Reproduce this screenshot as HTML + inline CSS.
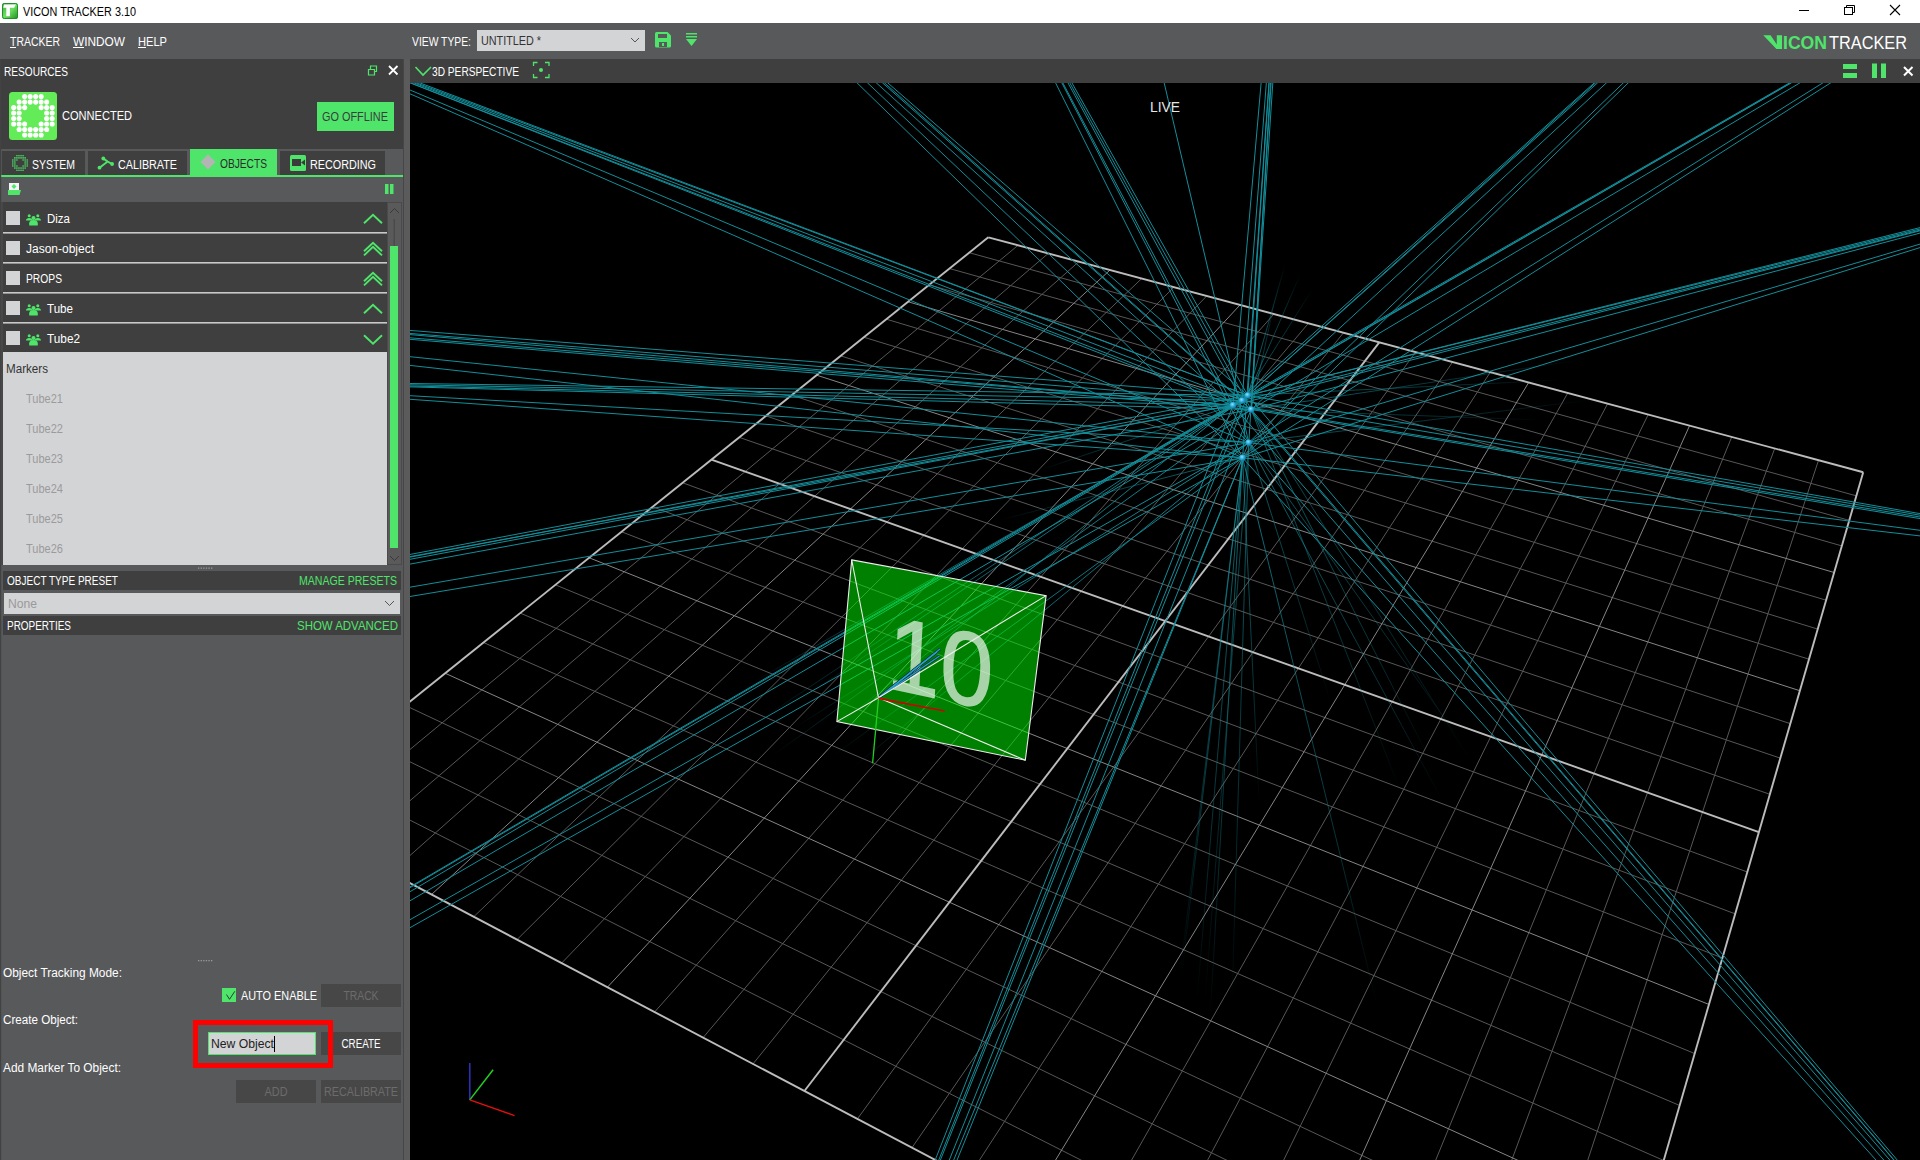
<!DOCTYPE html>
<html><head><meta charset="utf-8"><title>Vicon Tracker</title>
<style>html,body{margin:0;padding:0;background:#58595b;overflow:hidden;width:1920px;height:1160px}svg{display:block}text{white-space:pre}</style>
</head><body>
<svg width="1920" height="1160" viewBox="0 0 1920 1160">
<defs><clipPath id="vp"><rect x="410" y="83" width="1510" height="1077"/></clipPath><radialGradient id="mk" cx="0.4" cy="0.35" r="0.7"><stop offset="0" stop-color="#8fe3ff"/><stop offset="0.5" stop-color="#2aa9da"/><stop offset="1" stop-color="#0e6f95"/></radialGradient></defs>
<rect x="410" y="83" width="1510" height="1077" fill="#000" />
<g clip-path="url(#vp)">
<line x1="1018.02" y1="245.32" x2="311.41" y2="831.22" stroke="#575757" stroke-width="1" />
<line x1="969.21" y1="252.70" x2="1856.36" y2="495.84" stroke="#575757" stroke-width="1" />
<line x1="1048.19" y1="253.42" x2="350.40" y2="851.76" stroke="#575757" stroke-width="1" />
<line x1="949.48" y1="268.54" x2="1849.25" y2="520.39" stroke="#575757" stroke-width="1" />
<line x1="1078.85" y1="261.65" x2="390.42" y2="872.85" stroke="#575757" stroke-width="1" />
<line x1="929.11" y1="284.89" x2="1841.85" y2="545.92" stroke="#575757" stroke-width="1" />
<line x1="1141.71" y1="278.53" x2="473.71" y2="916.74" stroke="#575757" stroke-width="1" />
<line x1="886.36" y1="319.20" x2="1826.11" y2="600.20" stroke="#575757" stroke-width="1" />
<line x1="1173.94" y1="287.18" x2="517.07" y2="939.59" stroke="#575757" stroke-width="1" />
<line x1="863.90" y1="337.23" x2="1817.74" y2="629.08" stroke="#575757" stroke-width="1" />
<line x1="1206.71" y1="295.98" x2="561.63" y2="963.07" stroke="#575757" stroke-width="1" />
<line x1="840.66" y1="355.88" x2="1809.00" y2="659.23" stroke="#575757" stroke-width="1" />
<line x1="1273.94" y1="314.03" x2="654.58" y2="1012.04" stroke="#575757" stroke-width="1" />
<line x1="791.72" y1="395.16" x2="1790.33" y2="723.66" stroke="#575757" stroke-width="1" />
<line x1="1308.44" y1="323.29" x2="703.08" y2="1037.60" stroke="#575757" stroke-width="1" />
<line x1="765.92" y1="415.87" x2="1780.33" y2="758.14" stroke="#575757" stroke-width="1" />
<line x1="1343.54" y1="332.71" x2="753.00" y2="1063.90" stroke="#575757" stroke-width="1" />
<line x1="739.17" y1="437.34" x2="1769.86" y2="794.27" stroke="#575757" stroke-width="1" />
<line x1="1415.63" y1="352.07" x2="857.39" y2="1118.91" stroke="#575757" stroke-width="1" />
<line x1="682.60" y1="482.75" x2="1747.33" y2="871.99" stroke="#575757" stroke-width="1" />
<line x1="1452.65" y1="362.01" x2="911.99" y2="1147.68" stroke="#575757" stroke-width="1" />
<line x1="652.66" y1="506.78" x2="1735.20" y2="913.86" stroke="#575757" stroke-width="1" />
<line x1="1490.34" y1="372.13" x2="968.30" y2="1177.35" stroke="#575757" stroke-width="1" />
<line x1="621.53" y1="531.77" x2="1722.42" y2="957.95" stroke="#575757" stroke-width="1" />
<line x1="1567.83" y1="392.93" x2="1086.38" y2="1239.57" stroke="#575757" stroke-width="1" />
<line x1="555.39" y1="584.85" x2="1694.71" y2="1053.55" stroke="#575757" stroke-width="1" />
<line x1="1607.66" y1="403.62" x2="1148.32" y2="1272.21" stroke="#575757" stroke-width="1" />
<line x1="520.22" y1="613.08" x2="1679.66" y2="1105.48" stroke="#575757" stroke-width="1" />
<line x1="1648.24" y1="414.51" x2="1212.33" y2="1305.94" stroke="#575757" stroke-width="1" />
<line x1="483.53" y1="642.53" x2="1663.71" y2="1160.48" stroke="#575757" stroke-width="1" />
<line x1="1731.74" y1="436.93" x2="1346.98" y2="1376.89" stroke="#575757" stroke-width="1" />
<line x1="405.18" y1="705.42" x2="1628.81" y2="1280.91" stroke="#575757" stroke-width="1" />
<line x1="1774.71" y1="448.47" x2="1417.85" y2="1414.23" stroke="#575757" stroke-width="1" />
<line x1="363.28" y1="739.05" x2="1609.65" y2="1347.00" stroke="#575757" stroke-width="1" />
<line x1="1818.53" y1="460.23" x2="1491.26" y2="1452.91" stroke="#575757" stroke-width="1" />
<line x1="319.41" y1="774.27" x2="1589.20" y2="1417.54" stroke="#575757" stroke-width="1" />
<line x1="1110.02" y1="270.02" x2="431.51" y2="894.50" stroke="#858585" stroke-width="1" />
<line x1="908.08" y1="301.76" x2="1834.14" y2="572.50" stroke="#858585" stroke-width="1" />
<line x1="1240.04" y1="304.93" x2="607.45" y2="987.21" stroke="#858585" stroke-width="1" />
<line x1="816.62" y1="375.18" x2="1799.87" y2="690.72" stroke="#858585" stroke-width="1" />
<line x1="1528.73" y1="382.43" x2="1026.40" y2="1207.97" stroke="#858585" stroke-width="1" />
<line x1="589.13" y1="557.77" x2="1708.94" y2="1004.45" stroke="#858585" stroke-width="1" />
<line x1="1689.59" y1="425.62" x2="1278.52" y2="1340.81" stroke="#858585" stroke-width="1" />
<line x1="445.22" y1="673.28" x2="1646.79" y2="1218.85" stroke="#858585" stroke-width="1" />
<line x1="988.33" y1="237.35" x2="273.40" y2="811.19" stroke="#bcbcbc" stroke-width="1.9" />
<line x1="988.33" y1="237.35" x2="1863.21" y2="472.22" stroke="#bcbcbc" stroke-width="1.9" />
<line x1="1379.27" y1="342.31" x2="804.41" y2="1090.99" stroke="#bcbcbc" stroke-width="1.9" />
<line x1="711.42" y1="459.62" x2="1758.87" y2="832.17" stroke="#bcbcbc" stroke-width="1.9" />
<line x1="1863.21" y1="472.22" x2="1567.33" y2="1493.00" stroke="#bcbcbc" stroke-width="1.9" />
<line x1="273.40" y1="811.19" x2="1567.33" y2="1493.00" stroke="#bcbcbc" stroke-width="1.9" />
<line x1="401.49" y1="75.94" x2="1247.80" y2="395.40" stroke="#138e9a" stroke-width="1.0" />
<line x1="397.98" y1="75.96" x2="1247.80" y2="395.40" stroke="#138e9a" stroke-width="1.0" />
<line x1="395.33" y1="75.84" x2="1242.10" y2="400.60" stroke="#138e9a" stroke-width="1.0" />
<line x1="391.88" y1="75.70" x2="1233.00" y2="405.30" stroke="#138e9a" stroke-width="1.0" />
<line x1="391.56" y1="82.25" x2="1248.80" y2="442.60" stroke="#138e9a" stroke-width="1.0" />
<line x1="391.67" y1="85.79" x2="1242.60" y2="457.80" stroke="#138e9a" stroke-width="1.0" />
<line x1="390.07" y1="332.89" x2="1233.00" y2="405.30" stroke="#138e9a" stroke-width="1.0" />
<line x1="390.07" y1="336.17" x2="1233.00" y2="405.30" stroke="#138e9a" stroke-width="1.0" />
<line x1="390.07" y1="337.64" x2="1251.20" y2="409.50" stroke="#138e9a" stroke-width="1.0" />
<line x1="390.10" y1="354.66" x2="1248.80" y2="442.60" stroke="#138e9a" stroke-width="1.0" />
<line x1="390.12" y1="363.19" x2="1242.60" y2="457.80" stroke="#138e9a" stroke-width="1.0" />
<line x1="390.00" y1="384.42" x2="1242.10" y2="400.60" stroke="#138e9a" stroke-width="1.0" />
<line x1="390.01" y1="386.36" x2="1251.20" y2="409.50" stroke="#138e9a" stroke-width="1.0" />
<line x1="390.03" y1="394.58" x2="1248.80" y2="442.60" stroke="#138e9a" stroke-width="1.0" />
<line x1="390.05" y1="397.90" x2="1242.60" y2="457.80" stroke="#138e9a" stroke-width="1.0" />
<line x1="390.33" y1="560.22" x2="1233.00" y2="405.30" stroke="#138e9a" stroke-width="1.0" />
<line x1="390.34" y1="562.98" x2="1233.00" y2="405.30" stroke="#138e9a" stroke-width="1.0" />
<line x1="390.33" y1="567.72" x2="1251.20" y2="409.50" stroke="#138e9a" stroke-width="1.0" />
<line x1="390.29" y1="590.60" x2="1248.80" y2="442.60" stroke="#138e9a" stroke-width="1.0" />
<line x1="390.27" y1="599.79" x2="1242.60" y2="457.80" stroke="#138e9a" stroke-width="1.0" />
<line x1="392.78" y1="901.87" x2="1242.10" y2="400.60" stroke="#138e9a" stroke-width="1.0" />
<line x1="392.73" y1="910.89" x2="1251.20" y2="409.50" stroke="#138e9a" stroke-width="1.0" />
<line x1="392.62" y1="929.59" x2="1248.80" y2="442.60" stroke="#138e9a" stroke-width="1.0" />
<line x1="392.58" y1="937.53" x2="1242.60" y2="457.80" stroke="#138e9a" stroke-width="1.0" />
<line x1="842.86" y1="69.06" x2="1242.60" y2="457.80" stroke="#138e9a" stroke-width="1.0" />
<line x1="861.66" y1="69.59" x2="1233.00" y2="405.30" stroke="#138e9a" stroke-width="1.0" />
<line x1="867.73" y1="69.74" x2="1251.20" y2="409.50" stroke="#138e9a" stroke-width="1.0" />
<line x1="872.80" y1="69.89" x2="1247.80" y2="395.40" stroke="#138e9a" stroke-width="1.0" />
<line x1="1052.68" y1="65.25" x2="1248.80" y2="442.60" stroke="#138e9a" stroke-width="1.0" />
<line x1="1062.19" y1="65.57" x2="1247.80" y2="395.40" stroke="#138e9a" stroke-width="1.0" />
<line x1="1159.62" y1="63.53" x2="1248.80" y2="442.60" stroke="#138e9a" stroke-width="1.0" />
<line x1="1262.84" y1="63.08" x2="1233.00" y2="405.30" stroke="#138e9a" stroke-width="1.0" />
<line x1="1270.30" y1="63.05" x2="1242.60" y2="457.80" stroke="#138e9a" stroke-width="1.0" />
<line x1="1271.68" y1="63.03" x2="1251.20" y2="409.50" stroke="#138e9a" stroke-width="1.0" />
<line x1="1274.12" y1="63.04" x2="1251.20" y2="409.50" stroke="#138e9a" stroke-width="1.0" />
<line x1="1610.28" y1="69.63" x2="1247.80" y2="395.40" stroke="#138e9a" stroke-width="1.0" />
<line x1="1612.31" y1="69.67" x2="1242.10" y2="400.60" stroke="#138e9a" stroke-width="1.0" />
<line x1="1621.02" y1="69.46" x2="1251.20" y2="409.50" stroke="#138e9a" stroke-width="1.0" />
<line x1="1637.62" y1="69.15" x2="1248.80" y2="442.60" stroke="#138e9a" stroke-width="1.0" />
<line x1="1642.44" y1="69.06" x2="1242.60" y2="457.80" stroke="#138e9a" stroke-width="1.0" />
<line x1="1806.62" y1="73.01" x2="1247.80" y2="395.40" stroke="#138e9a" stroke-width="1.0" />
<line x1="1816.89" y1="72.77" x2="1251.20" y2="409.50" stroke="#138e9a" stroke-width="1.0" />
<line x1="1839.55" y1="72.38" x2="1248.80" y2="442.60" stroke="#138e9a" stroke-width="1.0" />
<line x1="1847.26" y1="72.25" x2="1242.60" y2="457.80" stroke="#138e9a" stroke-width="1.0" />
<line x1="1939.40" y1="222.76" x2="1247.80" y2="395.40" stroke="#138e9a" stroke-width="1.0" />
<line x1="1939.41" y1="224.19" x2="1247.80" y2="395.40" stroke="#138e9a" stroke-width="1.0" />
<line x1="1939.34" y1="228.00" x2="1251.20" y2="409.50" stroke="#138e9a" stroke-width="1.0" />
<line x1="1939.18" y1="238.43" x2="1248.80" y2="442.60" stroke="#138e9a" stroke-width="1.0" />
<line x1="1939.10" y1="241.67" x2="1242.60" y2="457.80" stroke="#138e9a" stroke-width="1.0" />
<line x1="1939.72" y1="518.53" x2="1242.10" y2="400.60" stroke="#138e9a" stroke-width="1.0" />
<line x1="1939.74" y1="520.21" x2="1233.00" y2="405.30" stroke="#138e9a" stroke-width="1.0" />
<line x1="1939.74" y1="521.82" x2="1251.20" y2="409.50" stroke="#138e9a" stroke-width="1.0" />
<line x1="1939.83" y1="532.89" x2="1248.80" y2="442.60" stroke="#138e9a" stroke-width="1.0" />
<line x1="1939.87" y1="538.19" x2="1242.60" y2="457.80" stroke="#138e9a" stroke-width="1.0" />
<line x1="927.86" y1="1178.60" x2="1233.00" y2="405.30" stroke="#138e9a" stroke-width="1.0" />
<line x1="932.94" y1="1178.56" x2="1247.80" y2="395.40" stroke="#138e9a" stroke-width="1.0" />
<line x1="941.84" y1="1178.56" x2="1251.20" y2="409.50" stroke="#138e9a" stroke-width="1.0" />
<line x1="949.57" y1="1178.53" x2="1242.60" y2="457.80" stroke="#138e9a" stroke-width="1.0" />
<line x1="1889.40" y1="1174.85" x2="1242.60" y2="457.80" stroke="#138e9a" stroke-width="1.0" />
<line x1="1897.06" y1="1174.98" x2="1248.80" y2="442.60" stroke="#138e9a" stroke-width="1.0" />
<line x1="1902.93" y1="1175.09" x2="1233.00" y2="405.30" stroke="#138e9a" stroke-width="1.0" />
<line x1="1907.11" y1="1175.19" x2="1251.20" y2="409.50" stroke="#138e9a" stroke-width="1.0" />
<line x1="197.73" y1="0.21" x2="1251.20" y2="409.50" stroke="#138e9a" stroke-width="1.0" />
<line x1="-548.39" y1="256.11" x2="1247.80" y2="395.40" stroke="#138e9a" stroke-width="1.0" />
<line x1="-548.39" y1="256.11" x2="1242.10" y2="400.60" stroke="#138e9a" stroke-width="1.0" />
<line x1="135.36" y1="379.58" x2="1247.80" y2="395.40" stroke="#138e9a" stroke-width="1.0" />
<line x1="135.36" y1="379.58" x2="1233.00" y2="405.30" stroke="#138e9a" stroke-width="1.0" />
<line x1="-1137.29" y1="848.22" x2="1247.80" y2="395.40" stroke="#138e9a" stroke-width="1.0" />
<line x1="-1137.29" y1="848.22" x2="1242.10" y2="400.60" stroke="#138e9a" stroke-width="1.0" />
<line x1="-1135.06" y1="1793.24" x2="1247.80" y2="395.40" stroke="#138e9a" stroke-width="1.0" />
<line x1="-1135.06" y1="1793.24" x2="1233.00" y2="405.30" stroke="#138e9a" stroke-width="1.0" />
<line x1="591.97" y1="-177.10" x2="1242.10" y2="400.60" stroke="#138e9a" stroke-width="1.0" />
<line x1="591.97" y1="-177.10" x2="1248.80" y2="442.60" stroke="#138e9a" stroke-width="1.0" />
<line x1="930.34" y1="-168.21" x2="1242.10" y2="400.60" stroke="#138e9a" stroke-width="1.0" />
<line x1="930.34" y1="-168.21" x2="1233.00" y2="405.30" stroke="#138e9a" stroke-width="1.0" />
<line x1="930.34" y1="-168.21" x2="1251.20" y2="409.50" stroke="#138e9a" stroke-width="1.0" />
<line x1="930.34" y1="-168.21" x2="1242.60" y2="457.80" stroke="#138e9a" stroke-width="1.0" />
<line x1="1291.89" y1="-251.88" x2="1247.80" y2="395.40" stroke="#138e9a" stroke-width="1.0" />
<line x1="1291.89" y1="-251.88" x2="1242.10" y2="400.60" stroke="#138e9a" stroke-width="1.0" />
<line x1="1291.89" y1="-251.88" x2="1248.80" y2="442.60" stroke="#138e9a" stroke-width="1.0" />
<line x1="1982.75" y1="-263.83" x2="1233.00" y2="405.30" stroke="#138e9a" stroke-width="1.0" />
<line x1="2221.93" y1="-166.31" x2="1242.10" y2="400.60" stroke="#138e9a" stroke-width="1.0" />
<line x1="2221.93" y1="-166.31" x2="1233.00" y2="405.30" stroke="#138e9a" stroke-width="1.0" />
<line x1="2214.98" y1="155.93" x2="1242.10" y2="400.60" stroke="#138e9a" stroke-width="1.0" />
<line x1="2214.98" y1="155.93" x2="1233.00" y2="405.30" stroke="#138e9a" stroke-width="1.0" />
<line x1="2260.82" y1="573.59" x2="1247.80" y2="395.40" stroke="#138e9a" stroke-width="1.0" />
<line x1="440.10" y1="2408.55" x2="1242.10" y2="400.60" stroke="#138e9a" stroke-width="1.0" />
<line x1="440.10" y1="2408.55" x2="1248.80" y2="442.60" stroke="#138e9a" stroke-width="1.0" />
<line x1="2228.09" y1="1549.61" x2="1247.80" y2="395.40" stroke="#138e9a" stroke-width="1.0" />
<line x1="2228.09" y1="1549.61" x2="1242.10" y2="400.60" stroke="#138e9a" stroke-width="1.0" />
<linearGradient id="fg0" gradientUnits="userSpaceOnUse" x1="1242.6" y1="457.8" x2="1182" y2="972"><stop offset="0" stop-color="#138e9a" stop-opacity="0.83"/><stop offset="0.7" stop-color="#138e9a" stop-opacity="0.36"/><stop offset="1" stop-color="#138e9a" stop-opacity="0"/></linearGradient>
<line x1="1242.6" y1="457.8" x2="1182" y2="972" stroke="url(#fg0)" stroke-width="1"/>
<linearGradient id="fg1" gradientUnits="userSpaceOnUse" x1="1242.6" y1="457.8" x2="1197" y2="1000"><stop offset="0" stop-color="#138e9a" stop-opacity="0.75"/><stop offset="0.7" stop-color="#138e9a" stop-opacity="0.33"/><stop offset="1" stop-color="#138e9a" stop-opacity="0"/></linearGradient>
<line x1="1242.6" y1="457.8" x2="1197" y2="1000" stroke="url(#fg1)" stroke-width="1"/>
<linearGradient id="fg2" gradientUnits="userSpaceOnUse" x1="1242.6" y1="457.8" x2="1210" y2="1019"><stop offset="0" stop-color="#138e9a" stop-opacity="0.75"/><stop offset="0.7" stop-color="#138e9a" stop-opacity="0.33"/><stop offset="1" stop-color="#138e9a" stop-opacity="0"/></linearGradient>
<line x1="1242.6" y1="457.8" x2="1210" y2="1019" stroke="url(#fg2)" stroke-width="1"/>
<linearGradient id="fg3" gradientUnits="userSpaceOnUse" x1="1248.8" y1="442.6" x2="1232" y2="1000"><stop offset="0" stop-color="#138e9a" stop-opacity="0.68"/><stop offset="0.7" stop-color="#138e9a" stop-opacity="0.29"/><stop offset="1" stop-color="#138e9a" stop-opacity="0"/></linearGradient>
<line x1="1248.8" y1="442.6" x2="1232" y2="1000" stroke="url(#fg3)" stroke-width="1"/>
<linearGradient id="fg4" gradientUnits="userSpaceOnUse" x1="1242.6" y1="457.8" x2="1259" y2="802"><stop offset="0" stop-color="#138e9a" stop-opacity="0.75"/><stop offset="0.7" stop-color="#138e9a" stop-opacity="0.33"/><stop offset="1" stop-color="#138e9a" stop-opacity="0"/></linearGradient>
<line x1="1242.6" y1="457.8" x2="1259" y2="802" stroke="url(#fg4)" stroke-width="1"/>
<linearGradient id="fg5" gradientUnits="userSpaceOnUse" x1="1248.8" y1="442.6" x2="1205" y2="1000"><stop offset="0" stop-color="#138e9a" stop-opacity="0.60"/><stop offset="0.7" stop-color="#138e9a" stop-opacity="0.26"/><stop offset="1" stop-color="#138e9a" stop-opacity="0"/></linearGradient>
<line x1="1248.8" y1="442.6" x2="1205" y2="1000" stroke="url(#fg5)" stroke-width="1"/>
<linearGradient id="fg6" gradientUnits="userSpaceOnUse" x1="1251.2" y1="409.5" x2="1430" y2="760"><stop offset="0" stop-color="#138e9a" stop-opacity="0.75"/><stop offset="0.7" stop-color="#138e9a" stop-opacity="0.33"/><stop offset="1" stop-color="#138e9a" stop-opacity="0"/></linearGradient>
<line x1="1251.2" y1="409.5" x2="1430" y2="760" stroke="url(#fg6)" stroke-width="1"/>
<linearGradient id="fg7" gradientUnits="userSpaceOnUse" x1="1248.8" y1="442.6" x2="1460" y2="740"><stop offset="0" stop-color="#138e9a" stop-opacity="0.68"/><stop offset="0.7" stop-color="#138e9a" stop-opacity="0.29"/><stop offset="1" stop-color="#138e9a" stop-opacity="0"/></linearGradient>
<line x1="1248.8" y1="442.6" x2="1460" y2="740" stroke="url(#fg7)" stroke-width="1"/>
<linearGradient id="fg8" gradientUnits="userSpaceOnUse" x1="1251.2" y1="409.5" x2="1400" y2="790"><stop offset="0" stop-color="#138e9a" stop-opacity="0.68"/><stop offset="0.7" stop-color="#138e9a" stop-opacity="0.29"/><stop offset="1" stop-color="#138e9a" stop-opacity="0"/></linearGradient>
<line x1="1251.2" y1="409.5" x2="1400" y2="790" stroke="url(#fg8)" stroke-width="1"/>
<linearGradient id="fg9" gradientUnits="userSpaceOnUse" x1="1248.8" y1="442.6" x2="1330" y2="700"><stop offset="0" stop-color="#138e9a" stop-opacity="0.68"/><stop offset="0.7" stop-color="#138e9a" stop-opacity="0.29"/><stop offset="1" stop-color="#138e9a" stop-opacity="0"/></linearGradient>
<line x1="1248.8" y1="442.6" x2="1330" y2="700" stroke="url(#fg9)" stroke-width="1"/>
<linearGradient id="fg10" gradientUnits="userSpaceOnUse" x1="1247.8" y1="395.4" x2="1285" y2="265"><stop offset="0" stop-color="#138e9a" stop-opacity="0.83"/><stop offset="0.7" stop-color="#138e9a" stop-opacity="0.36"/><stop offset="1" stop-color="#138e9a" stop-opacity="0"/></linearGradient>
<line x1="1247.8" y1="395.4" x2="1285" y2="265" stroke="url(#fg10)" stroke-width="1"/>
<linearGradient id="fg11" gradientUnits="userSpaceOnUse" x1="1247.8" y1="395.4" x2="1300" y2="275"><stop offset="0" stop-color="#138e9a" stop-opacity="0.75"/><stop offset="0.7" stop-color="#138e9a" stop-opacity="0.33"/><stop offset="1" stop-color="#138e9a" stop-opacity="0"/></linearGradient>
<line x1="1247.8" y1="395.4" x2="1300" y2="275" stroke="url(#fg11)" stroke-width="1"/>
<linearGradient id="fg12" gradientUnits="userSpaceOnUse" x1="1242.1" y1="400.6" x2="1312" y2="290"><stop offset="0" stop-color="#138e9a" stop-opacity="0.68"/><stop offset="0.7" stop-color="#138e9a" stop-opacity="0.29"/><stop offset="1" stop-color="#138e9a" stop-opacity="0"/></linearGradient>
<line x1="1242.1" y1="400.6" x2="1312" y2="290" stroke="url(#fg12)" stroke-width="1"/>
<linearGradient id="fg13" gradientUnits="userSpaceOnUse" x1="1251.2" y1="409.5" x2="1275" y2="300"><stop offset="0" stop-color="#138e9a" stop-opacity="0.68"/><stop offset="0.7" stop-color="#138e9a" stop-opacity="0.29"/><stop offset="1" stop-color="#138e9a" stop-opacity="0"/></linearGradient>
<line x1="1251.2" y1="409.5" x2="1275" y2="300" stroke="url(#fg13)" stroke-width="1"/>
<linearGradient id="fg14" gradientUnits="userSpaceOnUse" x1="1251.2" y1="409.5" x2="1580" y2="360"><stop offset="0" stop-color="#138e9a" stop-opacity="0.68"/><stop offset="0.7" stop-color="#138e9a" stop-opacity="0.29"/><stop offset="1" stop-color="#138e9a" stop-opacity="0"/></linearGradient>
<line x1="1251.2" y1="409.5" x2="1580" y2="360" stroke="url(#fg14)" stroke-width="1"/>
<linearGradient id="fg15" gradientUnits="userSpaceOnUse" x1="1247.8" y1="395.4" x2="1560" y2="380"><stop offset="0" stop-color="#138e9a" stop-opacity="0.68"/><stop offset="0.7" stop-color="#138e9a" stop-opacity="0.29"/><stop offset="1" stop-color="#138e9a" stop-opacity="0"/></linearGradient>
<line x1="1247.8" y1="395.4" x2="1560" y2="380" stroke="url(#fg15)" stroke-width="1"/>
<linearGradient id="fg16" gradientUnits="userSpaceOnUse" x1="1248.8" y1="442.6" x2="1590" y2="400"><stop offset="0" stop-color="#138e9a" stop-opacity="0.60"/><stop offset="0.7" stop-color="#138e9a" stop-opacity="0.26"/><stop offset="1" stop-color="#138e9a" stop-opacity="0"/></linearGradient>
<line x1="1248.8" y1="442.6" x2="1590" y2="400" stroke="url(#fg16)" stroke-width="1"/>
<linearGradient id="fg17" gradientUnits="userSpaceOnUse" x1="1251.2" y1="409.5" x2="1540" y2="420"><stop offset="0" stop-color="#138e9a" stop-opacity="0.60"/><stop offset="0.7" stop-color="#138e9a" stop-opacity="0.26"/><stop offset="1" stop-color="#138e9a" stop-opacity="0"/></linearGradient>
<line x1="1251.2" y1="409.5" x2="1540" y2="420" stroke="url(#fg17)" stroke-width="1"/>
<linearGradient id="fg18" gradientUnits="userSpaceOnUse" x1="1233" y1="405.3" x2="750" y2="684"><stop offset="0" stop-color="#138e9a" stop-opacity="1.00"/><stop offset="0.7" stop-color="#138e9a" stop-opacity="0.65"/><stop offset="1" stop-color="#138e9a" stop-opacity="0"/></linearGradient>
<line x1="1233" y1="405.3" x2="750" y2="684" stroke="url(#fg18)" stroke-width="1"/>
<linearGradient id="fg19" gradientUnits="userSpaceOnUse" x1="1251.2" y1="409.5" x2="772" y2="756"><stop offset="0" stop-color="#138e9a" stop-opacity="1.00"/><stop offset="0.7" stop-color="#138e9a" stop-opacity="0.65"/><stop offset="1" stop-color="#138e9a" stop-opacity="0"/></linearGradient>
<line x1="1251.2" y1="409.5" x2="772" y2="756" stroke="url(#fg19)" stroke-width="1"/>
<linearGradient id="fg20" gradientUnits="userSpaceOnUse" x1="1248.8" y1="442.6" x2="794" y2="728"><stop offset="0" stop-color="#138e9a" stop-opacity="1.00"/><stop offset="0.7" stop-color="#138e9a" stop-opacity="0.65"/><stop offset="1" stop-color="#138e9a" stop-opacity="0"/></linearGradient>
<line x1="1248.8" y1="442.6" x2="794" y2="728" stroke="url(#fg20)" stroke-width="1"/>
<linearGradient id="fg21" gradientUnits="userSpaceOnUse" x1="1242.6" y1="457.8" x2="833" y2="756"><stop offset="0" stop-color="#138e9a" stop-opacity="1.00"/><stop offset="0.7" stop-color="#138e9a" stop-opacity="0.65"/><stop offset="1" stop-color="#138e9a" stop-opacity="0"/></linearGradient>
<line x1="1242.6" y1="457.8" x2="833" y2="756" stroke="url(#fg21)" stroke-width="1"/>
<linearGradient id="fg22" gradientUnits="userSpaceOnUse" x1="1242.1" y1="400.6" x2="800" y2="700"><stop offset="0" stop-color="#138e9a" stop-opacity="1.00"/><stop offset="0.7" stop-color="#138e9a" stop-opacity="0.65"/><stop offset="1" stop-color="#138e9a" stop-opacity="0"/></linearGradient>
<line x1="1242.1" y1="400.6" x2="800" y2="700" stroke="url(#fg22)" stroke-width="1"/>
<linearGradient id="fg23" gradientUnits="userSpaceOnUse" x1="1233" y1="405.3" x2="820" y2="740"><stop offset="0" stop-color="#138e9a" stop-opacity="1.00"/><stop offset="0.7" stop-color="#138e9a" stop-opacity="0.59"/><stop offset="1" stop-color="#138e9a" stop-opacity="0"/></linearGradient>
<line x1="1233" y1="405.3" x2="820" y2="740" stroke="url(#fg23)" stroke-width="1"/>
<linearGradient id="fg24" gradientUnits="userSpaceOnUse" x1="1248.8" y1="442.6" x2="850" y2="770"><stop offset="0" stop-color="#138e9a" stop-opacity="1.00"/><stop offset="0.7" stop-color="#138e9a" stop-opacity="0.59"/><stop offset="1" stop-color="#138e9a" stop-opacity="0"/></linearGradient>
<line x1="1248.8" y1="442.6" x2="850" y2="770" stroke="url(#fg24)" stroke-width="1"/>
<linearGradient id="fg25" gradientUnits="userSpaceOnUse" x1="1247.8" y1="395.4" x2="760" y2="720"><stop offset="0" stop-color="#138e9a" stop-opacity="1.00"/><stop offset="0.7" stop-color="#138e9a" stop-opacity="0.59"/><stop offset="1" stop-color="#138e9a" stop-opacity="0"/></linearGradient>
<line x1="1247.8" y1="395.4" x2="760" y2="720" stroke="url(#fg25)" stroke-width="1"/>
<linearGradient id="fg26" gradientUnits="userSpaceOnUse" x1="1233" y1="405.3" x2="1040" y2="470"><stop offset="0" stop-color="#138e9a" stop-opacity="0.75"/><stop offset="0.7" stop-color="#138e9a" stop-opacity="0.33"/><stop offset="1" stop-color="#138e9a" stop-opacity="0"/></linearGradient>
<line x1="1233" y1="405.3" x2="1040" y2="470" stroke="url(#fg26)" stroke-width="1"/>
<linearGradient id="fg27" gradientUnits="userSpaceOnUse" x1="1242.6" y1="457.8" x2="1000" y2="520"><stop offset="0" stop-color="#138e9a" stop-opacity="0.75"/><stop offset="0.7" stop-color="#138e9a" stop-opacity="0.33"/><stop offset="1" stop-color="#138e9a" stop-opacity="0"/></linearGradient>
<line x1="1242.6" y1="457.8" x2="1000" y2="520" stroke="url(#fg27)" stroke-width="1"/>
<linearGradient id="fg28" gradientUnits="userSpaceOnUse" x1="1242.6" y1="457.8" x2="1377" y2="1005"><stop offset="0" stop-color="#138e9a" stop-opacity="0.83"/><stop offset="0.7" stop-color="#138e9a" stop-opacity="0.36"/><stop offset="1" stop-color="#138e9a" stop-opacity="0"/></linearGradient>
<line x1="1242.6" y1="457.8" x2="1377" y2="1005" stroke="url(#fg28)" stroke-width="1"/>
<linearGradient id="fg29" gradientUnits="userSpaceOnUse" x1="1248.8" y1="442.6" x2="1442" y2="800"><stop offset="0" stop-color="#138e9a" stop-opacity="0.75"/><stop offset="0.7" stop-color="#138e9a" stop-opacity="0.33"/><stop offset="1" stop-color="#138e9a" stop-opacity="0"/></linearGradient>
<line x1="1248.8" y1="442.6" x2="1442" y2="800" stroke="url(#fg29)" stroke-width="1"/>
<linearGradient id="fg30" gradientUnits="userSpaceOnUse" x1="1251.2" y1="409.5" x2="1470" y2="760"><stop offset="0" stop-color="#138e9a" stop-opacity="0.60"/><stop offset="0.7" stop-color="#138e9a" stop-opacity="0.26"/><stop offset="1" stop-color="#138e9a" stop-opacity="0"/></linearGradient>
<line x1="1251.2" y1="409.5" x2="1470" y2="760" stroke="url(#fg30)" stroke-width="1"/>
<linearGradient id="fg31" gradientUnits="userSpaceOnUse" x1="1242.6" y1="457.8" x2="1180" y2="975"><stop offset="0" stop-color="#138e9a" stop-opacity="0.68"/><stop offset="0.7" stop-color="#138e9a" stop-opacity="0.29"/><stop offset="1" stop-color="#138e9a" stop-opacity="0"/></linearGradient>
<line x1="1242.6" y1="457.8" x2="1180" y2="975" stroke="url(#fg31)" stroke-width="1"/>
<polygon points="851.7,559.9 1046.1,595.6 1025.3,760.2 836.9,721.6" fill="#00ff00" fill-opacity="0.5"/>
<g opacity="0.66"><text x="0" y="0" font-family="Liberation Sans" font-size="107" fill="#ffffff" stroke="#ffffff" stroke-width="1.6" transform="matrix(0.88,0.19,-0.05,0.965,886.3,687.2)">10</text></g>
<line x1="878.50" y1="697.80" x2="940.00" y2="649.00" stroke="#0a2a40" stroke-width="2.6" />
<line x1="878.50" y1="697.80" x2="939.50" y2="656.00" stroke="#0a2a40" stroke-width="2.6" />
<line x1="878.50" y1="697.80" x2="937.00" y2="652.00" stroke="#0a2a40" stroke-width="2.6" />
<line x1="878.50" y1="697.80" x2="940.00" y2="649.00" stroke="#2aa0c8" stroke-width="1.3" />
<line x1="878.50" y1="697.80" x2="939.50" y2="656.00" stroke="#2aa0c8" stroke-width="1.3" />
<line x1="878.50" y1="697.80" x2="937.00" y2="652.00" stroke="#2aa0c8" stroke-width="1.3" />
<line x1="878.50" y1="697.80" x2="851.70" y2="559.90" stroke="#f0f0f0" stroke-width="1.05" />
<line x1="878.50" y1="697.80" x2="1046.10" y2="595.60" stroke="#f0f0f0" stroke-width="1.05" />
<line x1="878.50" y1="697.80" x2="1025.30" y2="760.20" stroke="#f0f0f0" stroke-width="1.05" />
<line x1="878.50" y1="697.80" x2="836.90" y2="721.60" stroke="#f0f0f0" stroke-width="1.05" />
<polygon points="851.7,559.9 1046.1,595.6 1025.3,760.2 836.9,721.6" fill="none" stroke="#ececec" stroke-width="1.1"/>
<line x1="878.50" y1="698.40" x2="944.60" y2="711.00" stroke="#d00000" stroke-width="1.6" />
<line x1="878.50" y1="698.40" x2="872.60" y2="763.20" stroke="#20d020" stroke-width="1.3" />
<circle cx="1247.8" cy="395.4" r="3.2" fill="url(#mk)"/>
<circle cx="1242.1" cy="400.6" r="3.2" fill="url(#mk)"/>
<circle cx="1233" cy="405.3" r="3.2" fill="url(#mk)"/>
<circle cx="1251.2" cy="409.5" r="3.2" fill="url(#mk)"/>
<circle cx="1248.8" cy="442.6" r="3.2" fill="url(#mk)"/>
<circle cx="1242.6" cy="457.8" r="3.2" fill="url(#mk)"/>
<line x1="469.80" y1="1099.90" x2="469.80" y2="1063.10" stroke="#3030c0" stroke-width="1.5" />
<line x1="469.80" y1="1099.90" x2="493.10" y2="1069.80" stroke="#20d020" stroke-width="1.5" />
<line x1="469.80" y1="1099.90" x2="514.50" y2="1115.60" stroke="#e01010" stroke-width="1.5" />
<text x="1150" y="112" font-family="Liberation Sans" font-size="15" fill="#e6e6e6" font-weight="normal" text-anchor="start" textLength="30" lengthAdjust="spacingAndGlyphs" >LIVE</text>
</g>
<rect x="0" y="0" width="1920" height="23" fill="#ffffff" />
<defs><linearGradient id="tg" x1="0" y1="0" x2="1" y2="1"><stop offset="0" stop-color="#3aa83a"/><stop offset="0.5" stop-color="#6ee060"/><stop offset="1" stop-color="#1f8a1f"/></linearGradient></defs>
<rect x="2" y="3" width="16" height="16" rx="2.2" fill="url(#tg)"/><rect x="2.5" y="3.5" width="15" height="15" rx="2" fill="none" stroke="#1f8f2a" stroke-width="1"/>
<path d="M3.9 4.6h11.9l-1.6 3.2h-4.3v8.4h-3.6v-8.4h-3z" fill="#fff"/>
<text x="23" y="16" font-family="Liberation Sans" font-size="12.5" fill="#000" font-weight="normal" text-anchor="start" textLength="113" lengthAdjust="spacingAndGlyphs" >VICON TRACKER 3.10</text>
<line x1="1799.00" y1="10.50" x2="1809.00" y2="10.50" stroke="#000" stroke-width="1" />
<rect x="1844.5" y="7.5" width="8" height="7" fill="none" stroke="#000" stroke-width="1"/><path d="M1846.5 7.5v-2h8v7h-2" fill="none" stroke="#000" stroke-width="1"/>
<path d="M1890 5l10 10M1900 5l-10 10" stroke="#000" stroke-width="1.1"/>
<rect x="0" y="23" width="1920" height="36" fill="#58595b" />
<text x="10" y="46" font-family="Liberation Sans" font-size="12.5" fill="#fff" font-weight="normal" text-anchor="start" textLength="50" lengthAdjust="spacingAndGlyphs" >TRACKER</text>
<text x="73" y="46" font-family="Liberation Sans" font-size="12.5" fill="#fff" font-weight="normal" text-anchor="start" textLength="52" lengthAdjust="spacingAndGlyphs" >WINDOW</text>
<text x="138" y="46" font-family="Liberation Sans" font-size="12.5" fill="#fff" font-weight="normal" text-anchor="start" textLength="29" lengthAdjust="spacingAndGlyphs" >HELP</text>
<line x1="10.00" y1="47.50" x2="16.00" y2="47.50" stroke="#fff" stroke-width="1" />
<line x1="73.00" y1="47.50" x2="84.00" y2="47.50" stroke="#fff" stroke-width="1" />
<line x1="138.00" y1="47.50" x2="146.00" y2="47.50" stroke="#fff" stroke-width="1" />
<text x="412" y="46" font-family="Liberation Sans" font-size="12.5" fill="#fff" font-weight="normal" text-anchor="start" textLength="59" lengthAdjust="spacingAndGlyphs" >VIEW TYPE:</text>
<rect x="477" y="30" width="168" height="21" fill="#d3d4d6" />
<text x="481" y="45" font-family="Liberation Sans" font-size="12.5" fill="#333" font-weight="normal" text-anchor="start" textLength="60" lengthAdjust="spacingAndGlyphs" >UNTITLED *</text>
<path d="M631 38l4 4l4-4" fill="none" stroke="#555" stroke-width="1"/>
<path d="M655 33.5a1.5 1.5 0 0 1 1.5-1.5h11l3.5 3.5v10.5a1.5 1.5 0 0 1-1.5 1.5h-13a1.5 1.5 0 0 1-1.5-1.5z" fill="#4fe56b"/>
<rect x="658" y="34" width="9" height="4" fill="#58595b"/><rect x="659" y="42" width="8" height="5" fill="#58595b"/><rect x="662" y="43" width="2" height="3" fill="#4fe56b"/>
<rect x="686" y="33" width="11" height="1.5" fill="#4fe56b"/><rect x="686" y="36" width="11" height="1.5" fill="#4fe56b"/><path d="M686 39h11l-5.5 7z" fill="#4fe56b"/>
<path d="M1763.3 35.2h7.3l6.2 9.2v-9.2h5.2v13.7h-5.6z" fill="#4fe56b"/>
<text x="1783" y="49" font-family="Liberation Sans" font-size="19" fill="#4fe56b" font-weight="bold" text-anchor="start" textLength="44" lengthAdjust="spacingAndGlyphs" >ICON</text>
<text x="1829" y="49" font-family="Liberation Sans" font-size="19" fill="#fff" font-weight="normal" text-anchor="start" textLength="78" lengthAdjust="spacingAndGlyphs" >TRACKER</text>
<rect x="0" y="59" width="410" height="1101" fill="#58595b" />
<rect x="0" y="59" width="403" height="90" fill="#3f3f3f" />
<text x="4" y="76" font-family="Liberation Sans" font-size="12" fill="#fff" font-weight="normal" text-anchor="start" textLength="64" lengthAdjust="spacingAndGlyphs" >RESOURCES</text>
<path d="M368.5 69.5h6v5.5h-6z M370.5 69.5v-3.5h6v5.5h-2" fill="none" stroke="#4fe56b" stroke-width="1.2"/>
<path d="M389 66l8.5 8.5M397.5 66l-8.5 8.5" stroke="#fff" stroke-width="1.8"/>
<rect x="9" y="92" width="48" height="48" rx="3.5" fill="#64eb58"/>
<circle cx="24.65" cy="96.62" r="2.55" fill="#fff"/>
<circle cx="30.15" cy="96.62" r="2.55" fill="#fff"/>
<circle cx="35.65" cy="96.62" r="2.55" fill="#fff"/>
<circle cx="41.15" cy="96.62" r="2.55" fill="#fff"/>
<circle cx="19.15" cy="102.10" r="2.55" fill="#fff"/>
<circle cx="24.65" cy="102.10" r="2.55" fill="#fff"/>
<circle cx="30.15" cy="102.10" r="2.55" fill="#fff"/>
<circle cx="35.65" cy="102.10" r="2.55" fill="#fff"/>
<circle cx="41.15" cy="102.10" r="2.55" fill="#fff"/>
<circle cx="46.65" cy="102.10" r="2.55" fill="#fff"/>
<circle cx="13.65" cy="107.58" r="2.55" fill="#fff"/>
<circle cx="19.15" cy="107.58" r="2.55" fill="#fff"/>
<circle cx="24.65" cy="107.58" r="2.55" fill="#fff"/>
<circle cx="41.15" cy="107.58" r="2.55" fill="#fff"/>
<circle cx="46.65" cy="107.58" r="2.55" fill="#fff"/>
<circle cx="52.15" cy="107.58" r="2.55" fill="#fff"/>
<circle cx="13.65" cy="113.06" r="2.55" fill="#fff"/>
<circle cx="19.15" cy="113.06" r="2.55" fill="#fff"/>
<circle cx="46.65" cy="113.06" r="2.55" fill="#fff"/>
<circle cx="52.15" cy="113.06" r="2.55" fill="#fff"/>
<circle cx="13.65" cy="118.54" r="2.55" fill="#fff"/>
<circle cx="19.15" cy="118.54" r="2.55" fill="#fff"/>
<circle cx="46.65" cy="118.54" r="2.55" fill="#fff"/>
<circle cx="52.15" cy="118.54" r="2.55" fill="#fff"/>
<circle cx="13.65" cy="124.02" r="2.55" fill="#fff"/>
<circle cx="19.15" cy="124.02" r="2.55" fill="#fff"/>
<circle cx="24.65" cy="124.02" r="2.55" fill="#fff"/>
<circle cx="41.15" cy="124.02" r="2.55" fill="#fff"/>
<circle cx="46.65" cy="124.02" r="2.55" fill="#fff"/>
<circle cx="52.15" cy="124.02" r="2.55" fill="#fff"/>
<circle cx="19.15" cy="129.50" r="2.55" fill="#fff"/>
<circle cx="24.65" cy="129.50" r="2.55" fill="#fff"/>
<circle cx="30.15" cy="129.50" r="2.55" fill="#fff"/>
<circle cx="35.65" cy="129.50" r="2.55" fill="#fff"/>
<circle cx="41.15" cy="129.50" r="2.55" fill="#fff"/>
<circle cx="46.65" cy="129.50" r="2.55" fill="#fff"/>
<circle cx="24.65" cy="134.98" r="2.55" fill="#fff"/>
<circle cx="30.15" cy="134.98" r="2.55" fill="#fff"/>
<circle cx="35.65" cy="134.98" r="2.55" fill="#fff"/>
<circle cx="41.15" cy="134.98" r="2.55" fill="#fff"/>
<text x="62" y="120" font-family="Liberation Sans" font-size="12" fill="#fff" font-weight="normal" text-anchor="start" textLength="70" lengthAdjust="spacingAndGlyphs" >CONNECTED</text>
<rect x="317" y="102" width="77" height="29" fill="#4fe56b" />
<text x="322" y="121" font-family="Liberation Sans" font-size="12" fill="#3c3c3c" font-weight="normal" text-anchor="start" textLength="66" lengthAdjust="spacingAndGlyphs" >GO OFFLINE</text>
<rect x="0" y="149" width="403" height="26" fill="#58595b" />
<rect x="2" y="151" width="83" height="24" fill="#3f3f3f" />
<rect x="88" y="151" width="99" height="24" fill="#3f3f3f" />
<rect x="190" y="149" width="87" height="26" fill="#4fe56b" />
<rect x="280" y="151" width="105" height="24" fill="#3f3f3f" />
<rect x="0" y="175" width="403" height="2" fill="#4fe56b" />
<text x="32" y="168.6" font-family="Liberation Sans" font-size="12" fill="#fff" font-weight="normal" text-anchor="start" textLength="43" lengthAdjust="spacingAndGlyphs" >SYSTEM</text>
<text x="118" y="168.6" font-family="Liberation Sans" font-size="12" fill="#fff" font-weight="normal" text-anchor="start" textLength="59" lengthAdjust="spacingAndGlyphs" >CALIBRATE</text>
<text x="220" y="168" font-family="Liberation Sans" font-size="12" fill="#2b2b2b" font-weight="normal" text-anchor="start" textLength="47" lengthAdjust="spacingAndGlyphs" >OBJECTS</text>
<text x="310" y="168.6" font-family="Liberation Sans" font-size="12" fill="#fff" font-weight="normal" text-anchor="start" textLength="66" lengthAdjust="spacingAndGlyphs" >RECORDING</text>
<circle cx="16.93" cy="155.82" r="0.8" fill="#4fe56b"/>
<circle cx="18.98" cy="155.82" r="0.8" fill="#4fe56b"/>
<circle cx="21.02" cy="155.82" r="0.8" fill="#4fe56b"/>
<circle cx="23.07" cy="155.82" r="0.8" fill="#4fe56b"/>
<circle cx="14.88" cy="157.88" r="0.8" fill="#4fe56b"/>
<circle cx="16.93" cy="157.88" r="0.8" fill="#4fe56b"/>
<circle cx="18.98" cy="157.88" r="0.8" fill="#4fe56b"/>
<circle cx="21.02" cy="157.88" r="0.8" fill="#4fe56b"/>
<circle cx="23.07" cy="157.88" r="0.8" fill="#4fe56b"/>
<circle cx="25.12" cy="157.88" r="0.8" fill="#4fe56b"/>
<circle cx="12.83" cy="159.93" r="0.8" fill="#4fe56b"/>
<circle cx="14.88" cy="159.93" r="0.8" fill="#4fe56b"/>
<circle cx="16.93" cy="159.93" r="0.8" fill="#4fe56b"/>
<circle cx="23.07" cy="159.93" r="0.8" fill="#4fe56b"/>
<circle cx="25.12" cy="159.93" r="0.8" fill="#4fe56b"/>
<circle cx="27.17" cy="159.93" r="0.8" fill="#4fe56b"/>
<circle cx="12.83" cy="161.97" r="0.8" fill="#4fe56b"/>
<circle cx="14.88" cy="161.97" r="0.8" fill="#4fe56b"/>
<circle cx="25.12" cy="161.97" r="0.8" fill="#4fe56b"/>
<circle cx="27.17" cy="161.97" r="0.8" fill="#4fe56b"/>
<circle cx="12.83" cy="164.03" r="0.8" fill="#4fe56b"/>
<circle cx="14.88" cy="164.03" r="0.8" fill="#4fe56b"/>
<circle cx="25.12" cy="164.03" r="0.8" fill="#4fe56b"/>
<circle cx="27.17" cy="164.03" r="0.8" fill="#4fe56b"/>
<circle cx="12.83" cy="166.07" r="0.8" fill="#4fe56b"/>
<circle cx="14.88" cy="166.07" r="0.8" fill="#4fe56b"/>
<circle cx="16.93" cy="166.07" r="0.8" fill="#4fe56b"/>
<circle cx="23.07" cy="166.07" r="0.8" fill="#4fe56b"/>
<circle cx="25.12" cy="166.07" r="0.8" fill="#4fe56b"/>
<circle cx="27.17" cy="166.07" r="0.8" fill="#4fe56b"/>
<circle cx="14.88" cy="168.12" r="0.8" fill="#4fe56b"/>
<circle cx="16.93" cy="168.12" r="0.8" fill="#4fe56b"/>
<circle cx="18.98" cy="168.12" r="0.8" fill="#4fe56b"/>
<circle cx="21.02" cy="168.12" r="0.8" fill="#4fe56b"/>
<circle cx="23.07" cy="168.12" r="0.8" fill="#4fe56b"/>
<circle cx="25.12" cy="168.12" r="0.8" fill="#4fe56b"/>
<circle cx="16.93" cy="170.18" r="0.8" fill="#4fe56b"/>
<circle cx="18.98" cy="170.18" r="0.8" fill="#4fe56b"/>
<circle cx="21.02" cy="170.18" r="0.8" fill="#4fe56b"/>
<circle cx="23.07" cy="170.18" r="0.8" fill="#4fe56b"/>
<path d="M99.5 167.7L107.7 161.6M103.3 158.5L107.7 161.6L112.1 164" fill="none" stroke="#4fe56b" stroke-width="1.9"/><circle cx="99.5" cy="167.7" r="1.9" fill="#4fe56b"/><circle cx="103.3" cy="158.5" r="1.9" fill="#4fe56b"/><circle cx="112.1" cy="164" r="1.9" fill="#4fe56b"/>
<path d="M208 154.5l7.5 7.5l-7.5 7.5l-7.5-7.5z" fill="#b4b4b4"/>
<rect x="290" y="155" width="16" height="16" rx="1.5" fill="#4fe56b"/><rect x="292" y="159" width="9" height="7" fill="#3b3b3b"/><path d="M301 162.5l4-3v6z" fill="#3b3b3b"/>
<rect x="0" y="177" width="403" height="25" fill="#58595b" />
<rect x="9" y="183" width="10" height="8" fill="#f4f4f4"/><path d="M14 184l2.5 2.5l-2.5 2.5l-2.5-2.5z" fill="#4fe56b"/><path d="M8 190h13l-1.5 5h-11.5z" fill="#4fe56b"/>
<rect x="385" y="184" width="3.5" height="10" fill="#4fe56b" />
<rect x="390" y="184" width="3.5" height="10" fill="#4fe56b" />
<rect x="1.2" y="202" width="1.8" height="363" fill="#474747" />
<rect x="3" y="202" width="384" height="30" fill="#3f3f3f" />
<rect x="6" y="211" width="14" height="14" fill="#d3d4d6" />
<g fill="#4fe56b"><circle cx="29.2" cy="215.8" r="1.5"/><circle cx="37.8" cy="215.8" r="1.5"/><path d="M26.0 220.5a3.2 2.6 0 0 1 6.4 0z M34.6 220.5a3.2 2.6 0 0 1 6.4 0z"/><circle cx="33.5" cy="218" r="2"/><path d="M29.2 225.5v-2a4.3 3.5 0 0 1 8.6 0v2z"/></g>
<text x="47" y="223" font-family="Liberation Sans" font-size="12.5" fill="#fff" font-weight="normal" text-anchor="start" textLength="23" lengthAdjust="spacingAndGlyphs" >Diza</text>
<path d="M364 223.2l9-8.5l9 8.5" fill="none" stroke="#4fe56b" stroke-width="1.9"/>
<rect x="3" y="232" width="384" height="30" fill="#3f3f3f" />
<rect x="6" y="241" width="14" height="14" fill="#d3d4d6" />
<text x="26" y="253" font-family="Liberation Sans" font-size="12.5" fill="#fff" font-weight="normal" text-anchor="start" textLength="68" lengthAdjust="spacingAndGlyphs" >Jason-object</text>
<path d="M364 251.2l9-8.5l9 8.5 M364 255.39999999999998l9-8.5l9 8.5" fill="none" stroke="#4fe56b" stroke-width="1.9"/>
<rect x="3" y="262" width="384" height="30" fill="#3f3f3f" />
<rect x="6" y="271" width="14" height="14" fill="#d3d4d6" />
<text x="26" y="283" font-family="Liberation Sans" font-size="12.5" fill="#fff" font-weight="normal" text-anchor="start" textLength="36" lengthAdjust="spacingAndGlyphs" >PROPS</text>
<path d="M364 281.2l9-8.5l9 8.5 M364 285.4l9-8.5l9 8.5" fill="none" stroke="#4fe56b" stroke-width="1.9"/>
<rect x="3" y="292" width="384" height="30" fill="#3f3f3f" />
<rect x="6" y="301" width="14" height="14" fill="#d3d4d6" />
<g fill="#4fe56b"><circle cx="29.2" cy="305.8" r="1.5"/><circle cx="37.8" cy="305.8" r="1.5"/><path d="M26.0 310.5a3.2 2.6 0 0 1 6.4 0z M34.6 310.5a3.2 2.6 0 0 1 6.4 0z"/><circle cx="33.5" cy="308" r="2"/><path d="M29.2 315.5v-2a4.3 3.5 0 0 1 8.6 0v2z"/></g>
<text x="47" y="313" font-family="Liberation Sans" font-size="12.5" fill="#fff" font-weight="normal" text-anchor="start" textLength="26" lengthAdjust="spacingAndGlyphs" >Tube</text>
<path d="M364 313.2l9-8.5l9 8.5" fill="none" stroke="#4fe56b" stroke-width="1.9"/>
<rect x="3" y="322" width="384" height="30" fill="#3f3f3f" />
<rect x="6" y="331" width="14" height="14" fill="#d3d4d6" />
<g fill="#4fe56b"><circle cx="29.2" cy="335.8" r="1.5"/><circle cx="37.8" cy="335.8" r="1.5"/><path d="M26.0 340.5a3.2 2.6 0 0 1 6.4 0z M34.6 340.5a3.2 2.6 0 0 1 6.4 0z"/><circle cx="33.5" cy="338" r="2"/><path d="M29.2 345.5v-2a4.3 3.5 0 0 1 8.6 0v2z"/></g>
<text x="47" y="343" font-family="Liberation Sans" font-size="12.5" fill="#fff" font-weight="normal" text-anchor="start" textLength="33" lengthAdjust="spacingAndGlyphs" >Tube2</text>
<path d="M364 335.2l9 8.5l9-8.5" fill="none" stroke="#4fe56b" stroke-width="1.9"/>
<rect x="3" y="232" width="384" height="1.6" fill="#c9c9c9" />
<rect x="3" y="262" width="384" height="1.6" fill="#c9c9c9" />
<rect x="3" y="292" width="384" height="1.6" fill="#c9c9c9" />
<rect x="3" y="322" width="384" height="1.6" fill="#c9c9c9" />
<rect x="3" y="352" width="384" height="213" fill="#d3d4d6" />
<text x="6" y="373" font-family="Liberation Sans" font-size="12.5" fill="#333" font-weight="normal" text-anchor="start" textLength="42" lengthAdjust="spacingAndGlyphs" >Markers</text>
<text x="26" y="403" font-family="Liberation Sans" font-size="12.5" fill="#9b9b9b" font-weight="normal" text-anchor="start" textLength="37" lengthAdjust="spacingAndGlyphs" >Tube21</text>
<text x="26" y="433" font-family="Liberation Sans" font-size="12.5" fill="#9b9b9b" font-weight="normal" text-anchor="start" textLength="37" lengthAdjust="spacingAndGlyphs" >Tube22</text>
<text x="26" y="463" font-family="Liberation Sans" font-size="12.5" fill="#9b9b9b" font-weight="normal" text-anchor="start" textLength="37" lengthAdjust="spacingAndGlyphs" >Tube23</text>
<text x="26" y="493" font-family="Liberation Sans" font-size="12.5" fill="#9b9b9b" font-weight="normal" text-anchor="start" textLength="37" lengthAdjust="spacingAndGlyphs" >Tube24</text>
<text x="26" y="523" font-family="Liberation Sans" font-size="12.5" fill="#9b9b9b" font-weight="normal" text-anchor="start" textLength="37" lengthAdjust="spacingAndGlyphs" >Tube25</text>
<text x="26" y="553" font-family="Liberation Sans" font-size="12.5" fill="#9b9b9b" font-weight="normal" text-anchor="start" textLength="37" lengthAdjust="spacingAndGlyphs" >Tube26</text>
<rect x="387" y="202" width="15" height="363" fill="#4a4a4a" />
<rect x="388" y="203" width="13" height="361" fill="#5a5a5a" />
<path d="M390 213l4.5-4.5l4.5 4.5" fill="none" stroke="#3a3a3a" stroke-width="1"/>
<rect x="393.5" y="219" width="1.5" height="27" fill="#4a4a4a" />
<rect x="390" y="246" width="8" height="302" fill="#4fe56b" />
<path d="M390 556l4.5 4.5l4.5-4.5" fill="none" stroke="#3a3a3a" stroke-width="1"/>
<rect x="198.0" y="567.5" width="1.3" height="1.3" fill="#9a9a9a" />
<rect x="198.0" y="960" width="1.3" height="1.3" fill="#9a9a9a" />
<rect x="200.6" y="567.5" width="1.3" height="1.3" fill="#9a9a9a" />
<rect x="200.6" y="960" width="1.3" height="1.3" fill="#9a9a9a" />
<rect x="203.2" y="567.5" width="1.3" height="1.3" fill="#9a9a9a" />
<rect x="203.2" y="960" width="1.3" height="1.3" fill="#9a9a9a" />
<rect x="205.8" y="567.5" width="1.3" height="1.3" fill="#9a9a9a" />
<rect x="205.8" y="960" width="1.3" height="1.3" fill="#9a9a9a" />
<rect x="208.4" y="567.5" width="1.3" height="1.3" fill="#9a9a9a" />
<rect x="208.4" y="960" width="1.3" height="1.3" fill="#9a9a9a" />
<rect x="211.0" y="567.5" width="1.3" height="1.3" fill="#9a9a9a" />
<rect x="211.0" y="960" width="1.3" height="1.3" fill="#9a9a9a" />
<rect x="403" y="59" width="1" height="1101" fill="#464646" />
<rect x="0" y="59" width="1.2" height="1101" fill="#424242" />
<rect x="407" y="603" width="1.5" height="1.5" fill="#9a9a9a" />
<rect x="407" y="606" width="1.5" height="1.5" fill="#9a9a9a" />
<rect x="407" y="609" width="1.5" height="1.5" fill="#9a9a9a" />
<rect x="407" y="612" width="1.5" height="1.5" fill="#9a9a9a" />
<rect x="407" y="615" width="1.5" height="1.5" fill="#9a9a9a" />
<rect x="407" y="618" width="1.5" height="1.5" fill="#9a9a9a" />
<rect x="3" y="571" width="398" height="19" fill="#3f3f3f" />
<text x="7" y="585" font-family="Liberation Sans" font-size="12" fill="#fff" font-weight="normal" text-anchor="start" textLength="111" lengthAdjust="spacingAndGlyphs" >OBJECT TYPE PRESET</text>
<text x="299" y="585" font-family="Liberation Sans" font-size="12" fill="#4fe56b" font-weight="normal" text-anchor="start" textLength="98" lengthAdjust="spacingAndGlyphs" >MANAGE PRESETS</text>
<rect x="4" y="593" width="396" height="21" fill="#d3d4d6" />
<text x="8" y="608" font-family="Liberation Sans" font-size="12.5" fill="#999" font-weight="normal" text-anchor="start" textLength="29" lengthAdjust="spacingAndGlyphs" >None</text>
<path d="M385 601l4.5 4.5l4.5-4.5" fill="none" stroke="#555" stroke-width="1"/>
<rect x="3" y="616" width="398" height="19" fill="#3f3f3f" />
<text x="7" y="630" font-family="Liberation Sans" font-size="12" fill="#fff" font-weight="normal" text-anchor="start" textLength="64" lengthAdjust="spacingAndGlyphs" >PROPERTIES</text>
<text x="297" y="630" font-family="Liberation Sans" font-size="12" fill="#4fe56b" font-weight="normal" text-anchor="start" textLength="101" lengthAdjust="spacingAndGlyphs" >SHOW ADVANCED</text>
<text x="3" y="977" font-family="Liberation Sans" font-size="12.5" fill="#fff" font-weight="normal" text-anchor="start" textLength="119" lengthAdjust="spacingAndGlyphs" >Object Tracking Mode:</text>
<rect x="222" y="988" width="14" height="14" fill="#4fe56b" />
<path d="M226.5 994.5l3 4.8l5.3-8" fill="none" stroke="#2b2b2b" stroke-width="0.9"/>
<text x="241" y="1000" font-family="Liberation Sans" font-size="12" fill="#fff" font-weight="normal" text-anchor="start" textLength="76" lengthAdjust="spacingAndGlyphs" >AUTO ENABLE</text>
<rect x="321" y="984" width="80" height="23" fill="#474747" />
<text x="361" y="1000" font-family="Liberation Sans" font-size="12" fill="#6c6c6c" font-weight="normal" text-anchor="middle" textLength="35" lengthAdjust="spacingAndGlyphs" >TRACK</text>
<text x="3" y="1024" font-family="Liberation Sans" font-size="12.5" fill="#fff" font-weight="normal" text-anchor="start" textLength="75" lengthAdjust="spacingAndGlyphs" >Create Object:</text>
<rect x="208" y="1032" width="108" height="23" fill="#4fe56b" />
<rect x="209" y="1033" width="106" height="21" fill="#d3d4d6" />
<text x="211" y="1048" font-family="Liberation Sans" font-size="12.5" fill="#222" font-weight="normal" text-anchor="start" textLength="63" lengthAdjust="spacingAndGlyphs" >New Object</text>
<rect x="274" y="1036" width="1" height="16" fill="#000" />
<rect x="321" y="1032" width="80" height="23" fill="#474747" />
<text x="361" y="1048" font-family="Liberation Sans" font-size="12" fill="#fff" font-weight="normal" text-anchor="middle" textLength="39" lengthAdjust="spacingAndGlyphs" >CREATE</text>
<text x="3" y="1072" font-family="Liberation Sans" font-size="12.5" fill="#fff" font-weight="normal" text-anchor="start" textLength="118" lengthAdjust="spacingAndGlyphs" >Add Marker To Object:</text>
<rect x="236" y="1080" width="80" height="23" fill="#474747" />
<rect x="321" y="1080" width="80" height="23" fill="#474747" />
<text x="276" y="1096" font-family="Liberation Sans" font-size="12" fill="#6c6c6c" font-weight="normal" text-anchor="middle" textLength="23" lengthAdjust="spacingAndGlyphs" >ADD</text>
<text x="361" y="1096" font-family="Liberation Sans" font-size="12" fill="#6c6c6c" font-weight="normal" text-anchor="middle" textLength="74" lengthAdjust="spacingAndGlyphs" >RECALIBRATE</text>
<rect x="404" y="59" width="6" height="1101" fill="#5b5b5b" />
<rect x="410" y="59" width="1510" height="24" fill="#3f3f3f" />
<path d="M415.5 67l7.5 8l8-8" fill="none" stroke="#4fe56b" stroke-width="1.6"/>
<text x="432" y="76" font-family="Liberation Sans" font-size="12" fill="#fff" font-weight="normal" text-anchor="start" textLength="87" lengthAdjust="spacingAndGlyphs" >3D PERSPECTIVE</text>
<path d="M533.5 66v-3.5h4 M545 62.5h4v3.5 M549 74v3.5h-4 M537.5 77.5h-4v-3.5" fill="none" stroke="#4fe56b" stroke-width="1.3"/><circle cx="541" cy="70" r="2" fill="#4fe56b"/>
<rect x="1843" y="64" width="14" height="5" fill="#4fe56b" />
<rect x="1843" y="73" width="14" height="5" fill="#4fe56b" />
<rect x="1872" y="63.5" width="5" height="14.5" fill="#4fe56b" />
<rect x="1881" y="63.5" width="5" height="14.5" fill="#4fe56b" />
<path d="M1904 67l8.5 8.5M1912.5 67l-8.5 8.5" stroke="#fff" stroke-width="2"/>
<rect x="195.5" y="1022.5" width="135" height="43" fill="none" stroke="#ff0000" stroke-width="5"/>
</svg>
</body></html>
